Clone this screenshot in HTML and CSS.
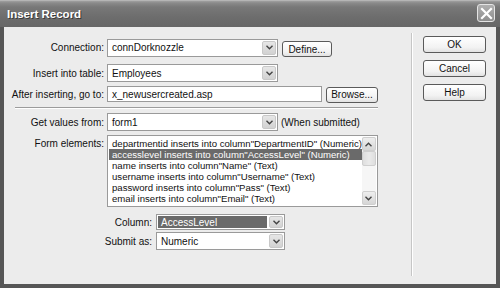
FILE: index.html
```html
<!DOCTYPE html>
<html>
<head>
<meta charset="utf-8">
<link rel="stylesheet" href="styles.css">
</head>
<body>
<div class="window">
  <div class="titlebar">
    <span class="title">Insert Record</span>
    <span class="close"><svg width="13" height="13" viewBox="0 0 13 13"><path d="M2 2 L11 11 M11 2 L2 11" stroke="#fff" stroke-width="2.2" stroke-linecap="square"/></svg></span>
  </div>
  <div class="content">
    <div class="main">
      <div class="row r-conn">
        <label class="lbl">Connection:</label>
        <div class="select w-171"><span class="val">connDorknozzle</span><span class="arrow"><svg width="7" height="5" viewBox="0 0 7 5"><path d="M0.5 0.8 L3.5 3.8 L6.5 0.8" fill="none" stroke="#444" stroke-width="1.4"/></svg></span></div>
        <button class="btn b-define">Define...</button>
      </div>
      <div class="row r-table">
        <label class="lbl">Insert into table:</label>
        <div class="select w-171"><span class="val">Employees</span><span class="arrow"><svg width="7" height="5" viewBox="0 0 7 5"><path d="M0.5 0.8 L3.5 3.8 L6.5 0.8" fill="none" stroke="#444" stroke-width="1.4"/></svg></span></div>
      </div>
      <div class="row r-after">
        <label class="lbl">After inserting, go to:</label>
        <div class="input"><span class="val">x_newusercreated.asp</span></div>
        <button class="btn b-browse">Browse...</button>
      </div>
      <div class="hr"></div>
      <div class="row r-get">
        <label class="lbl">Get values from:</label>
        <div class="select w-171"><span class="val">form1</span><span class="arrow"><svg width="7" height="5" viewBox="0 0 7 5"><path d="M0.5 0.8 L3.5 3.8 L6.5 0.8" fill="none" stroke="#444" stroke-width="1.4"/></svg></span></div>
        <span class="note">(When submitted)</span>
      </div>
      <div class="row r-list">
        <label class="lbl lbl-top">Form elements:</label>
        <div class="listbox">
          <div class="items">
            <div class="item">departmentid inserts into column"DepartmentID" (Numeric)</div>
            <div class="item sel">accesslevel inserts into column"AccessLevel" (Numeric)</div>
            <div class="item">name inserts into column"Name" (Text)</div>
            <div class="item">username inserts into column"Username" (Text)</div>
            <div class="item">password inserts into column"Pass" (Text)</div>
            <div class="item">email inserts into column"Email" (Text)</div>
          </div>
          <div class="scroll">
            <span class="sbtn"><svg width="7" height="5" viewBox="0 0 7 5"><path d="M0.5 4.2 L3.5 1.2 L6.5 4.2" fill="none" stroke="#444" stroke-width="1.4"/></svg></span>
            <span class="thumb"></span>
            <span class="track"></span>
            <span class="sbtn"><svg width="7" height="5" viewBox="0 0 7 5"><path d="M0.5 0.8 L3.5 3.8 L6.5 0.8" fill="none" stroke="#444" stroke-width="1.4"/></svg></span>
          </div>
        </div>
      </div>
      <div class="sub">
        <div class="row r-col">
          <label class="lbl2">Column:</label>
          <div class="select w-129"><span class="val hl">AccessLevel</span><span class="arrow"><svg width="7" height="5" viewBox="0 0 7 5"><path d="M0.5 0.8 L3.5 3.8 L6.5 0.8" fill="none" stroke="#444" stroke-width="1.4"/></svg></span></div>
        </div>
        <div class="row r-sub">
          <label class="lbl2">Submit as:</label>
          <div class="select w-129"><span class="val">Numeric</span><span class="arrow"><svg width="7" height="5" viewBox="0 0 7 5"><path d="M0.5 0.8 L3.5 3.8 L6.5 0.8" fill="none" stroke="#444" stroke-width="1.4"/></svg></span></div>
        </div>
      </div>
    </div>
    <div class="divider"></div>
    <div class="side">
      <button class="btn sbtn-big">OK</button>
      <button class="btn sbtn-big">Cancel</button>
      <button class="btn sbtn-big">Help</button>
    </div>
  </div>
</div>
</body>
</html>
```
FILE: styles.css
```css
* { box-sizing: border-box; }
html, body { margin: 0; padding: 0; }
body {
  width: 500px;
  height: 288px;
  overflow: hidden;
  font-family: "Liberation Sans", Arial, sans-serif;
  font-size: 10px;
  color: #111;
  background: #3c3c3c;
}
.window {
  width: 500px;
  height: 288px;
  display: flex;
  flex-direction: column;
  background: #565656;
  padding: 0 4px 4px 4px;
}
.titlebar {
  height: 27px;
  margin: 0 -4px;
  padding: 0 5px 0 7px;
  display: flex;
  align-items: center;
  justify-content: space-between;
  background: linear-gradient(#a0a0a0 0px, #8a8a8a 2px, #787878 6px, #6d6d6d 16px, #666666 27px);
  border-top: 1px solid #b5b5b5;
}
.title {
  color: #fff;
  font-weight: bold;
  font-size: 11.5px;
  text-shadow: 1px 1px 0 #3a3a3a;
}
.close {
  width: 18px;
  height: 18px;
  border: 1px solid #e4e4e4;
  border-radius: 3px;
  background: linear-gradient(#b0b0b0, #8e8e8e);
  display: flex;
  align-items: center;
  justify-content: center;
  margin-top: -2px;
}
.content {
  flex: 1;
  display: flex;
  background: #ececec;
}
.main {
  width: 407px;
  padding-top: 11px;
}
.row {
  display: flex;
  align-items: center;
}
.lbl {
  width: 100px;
  text-align: right;
  margin-right: 3px;
  white-space: nowrap;
}
.lbl-top { align-self: flex-start; padding-top: 3px; }
.select, .input {
  height: 18px;
  background: #fff;
  border: 1px solid #9a9a9a;
  display: flex;
  align-items: center;
  padding: 1px;
}
.w-171 { width: 171px; }
.w-129 { width: 129px; }
.val {
  flex: 1;
  padding-left: 3px;
  white-space: nowrap;
  overflow: hidden;
  align-self: stretch;
  display: flex;
  align-items: center;
}
.val.hl {
  background: #6a6a6a;
  color: #fff;
  margin-right: 2px;
}
.arrow {
  width: 14px;
  align-self: stretch;
  background: linear-gradient(#e6e6e6, #d2d2d2);
  border: 1px solid #c8c8c8;
  border-radius: 2px;
  display: flex;
  align-items: center;
  justify-content: center;
}
.input { width: 215px; }
.btn {
  font-family: "Liberation Sans", Arial, sans-serif;
  font-size: 10px;
  color: #111;
  background: linear-gradient(#ffffff, #f2f2f2 70%, #e2e2e2);
  border: 1px solid #5a5a5a;
  border-radius: 3px;
  height: 16px;
  padding: 0;
  display: flex;
  align-items: center;
  justify-content: center;
}
.b-define { width: 50px; margin-left: 4px; margin-top: 3px; }
.b-browse { width: 52px; margin-left: 4px; margin-top: 1px; }
.r-conn { height: 19px; }
.r-table { height: 18px; margin-top: 7px; }
.r-after { height: 16px; margin-top: 4px; }
.r-after .input { height: 16px; }
.hr {
  height: 2px;
  margin: 5px 0 4px 11px;
  width: 363px;
  border-top: 1px solid #9c9c9c;
  border-bottom: 1px solid #fff;
}
.r-get { height: 18px; }
.note { margin-left: 3px; white-space: nowrap; }
.r-list { margin-top: 4px; align-items: flex-start; }
.listbox {
  width: 271px;
  height: 72px;
  background: #fff;
  border: 1px solid #9a9a9a;
  display: flex;
  padding: 1px;
}
.items { flex: 1; padding-top: 1px; }
.item {
  height: 11px;
  line-height: 11px;
  padding-left: 3px;
  white-space: nowrap;
  overflow: hidden;
  font-size: 9.6px;
}
.item.sel { background: #6a6a6a; color: #fff; }
.scroll {
  width: 15px;
  display: flex;
  flex-direction: column;
  background: #f6f6f6;
}
.sbtn {
  height: 14px;
  background: linear-gradient(#eeeeee, #d6d6d6);
  border: 1px solid #cfcfcf;
  border-radius: 2px;
  display: flex;
  align-items: center;
  justify-content: center;
}
.thumb {
  height: 15px;
  background: linear-gradient(90deg, #dedede, #eaeaea, #dedede);
  border: 1px solid #cfcfcf;
  border-radius: 2px;
}
.track { flex: 1; }
.sub { margin-top: 7px; }
.lbl2 {
  width: 148px;
  text-align: right;
  margin-right: 4px;
  white-space: nowrap;
}
.r-col { height: 16px; }
.r-col .select { height: 16px; }
.r-sub { height: 18px; margin-top: 2px; }
.divider {
  width: 2px;
  margin-top: 6px;
  margin-bottom: 8px;
  border-left: 1px solid #c6c6c6;
  border-right: 1px solid #fff;
}
.side {
  flex: 1;
  padding: 9px 0 0 10px;
  display: flex;
  flex-direction: column;
  gap: 7px;
}
.sbtn-big { width: 63px; height: 17px; }
```
